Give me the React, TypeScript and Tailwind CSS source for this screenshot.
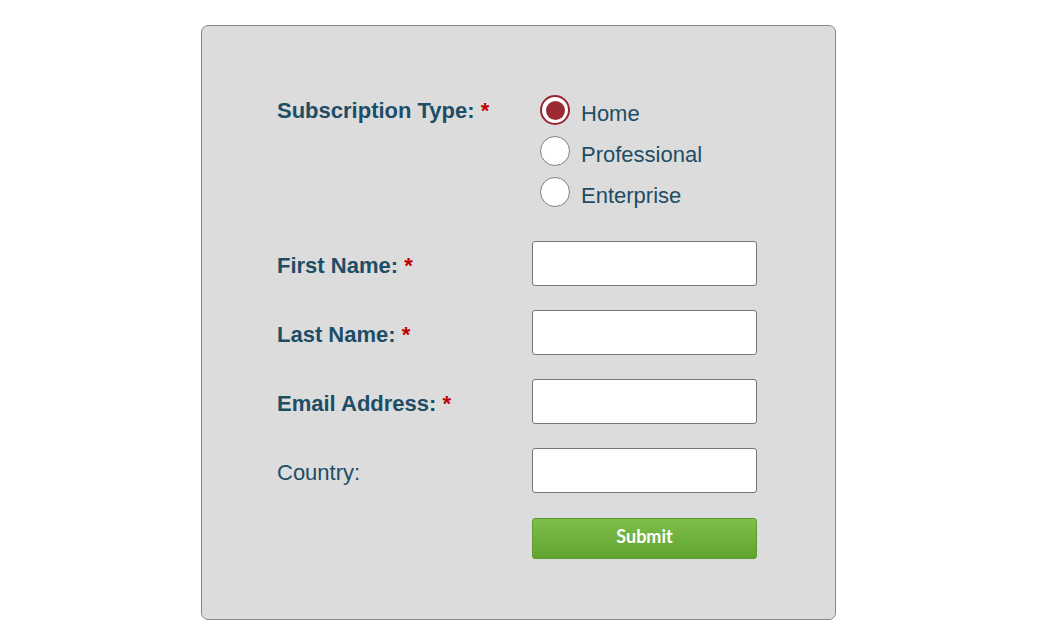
import { useState } from "react";

const OPTIONS = ["Home", "Professional", "Enterprise"];

const FIELDS = [
  { label: "First Name:", required: true },
  { label: "Last Name:", required: true },
  { label: "Email Address:", required: true },
  { label: "Country:", required: false },
];

function Radio({ checked }: { checked: boolean }) {
  if (checked) {
    return (
      <span className="flex h-[30px] w-[30px] shrink-0 items-center justify-center rounded-full border-2 border-[#9b2535] bg-white">
        <span className="block h-[19px] w-[19px] rounded-full bg-[#9b2a35]" />
      </span>
    );
  }
  return (
    <span className="block h-[30px] w-[30px] shrink-0 rounded-full border-[1.5px] border-[#808080] bg-white" />
  );
}

export default function App() {
  const [plan, setPlan] = useState("Home");

  return (
    <div className="min-h-screen bg-white pt-[25px] font-['Liberation_Sans',Arial,sans-serif] text-[22px] text-[#1e4d66]">
      <div className="ml-[201px] h-[595px] w-[635px] rounded-[7px] border border-[#888] bg-[#dcdcdc] pl-[75px] pt-[63px]">
        <div className="grid grid-cols-[255px_225px]">
          <div className="mt-[9px] font-bold leading-[25px]">
            Subscription Type: <span className="text-[#c00000]">*</span>
          </div>
          <div className="flex flex-col">
            {OPTIONS.map((o) => (
              <label
                key={o}
                onClick={() => setPlan(o)}
                className="flex h-[41px] cursor-pointer items-start gap-[11px] pl-[8px]"
              >
                <span className="mt-[6px] block">
                  <Radio checked={plan === o} />
                </span>
                <span className="mt-[12px] leading-[25px]">{o}</span>
              </label>
            ))}
          </div>
        </div>

        <div className="mt-[29px] flex flex-col gap-[24px]">
          {FIELDS.map((f) => (
            <div key={f.label} className="grid grid-cols-[255px_225px] items-center">
              <div className={f.required ? "pt-[3px] font-bold leading-[25px]" : "pt-[3px] leading-[25px]"}>
                {f.label}
                {f.required && <span className="text-[#c00000]"> *</span>}
              </div>
              <input
                type="text"
                className="h-[45px] w-[225px] rounded-[3px] border border-[#777] bg-white px-2 text-base outline-none"
              />
            </div>
          ))}

          <div className="grid grid-cols-[255px_225px] pt-px">
            <div />
            <button
              type="button"
              className="h-[41px] w-[225px] rounded-[3px] border border-[#5d9b2d] bg-gradient-to-b from-[#7ebe4b] to-[#60a42e] pb-[4px] font-['Lato',sans-serif] text-[18px] font-bold text-white"
            >
              Submit
            </button>
          </div>
        </div>
      </div>
    </div>
  );
}
